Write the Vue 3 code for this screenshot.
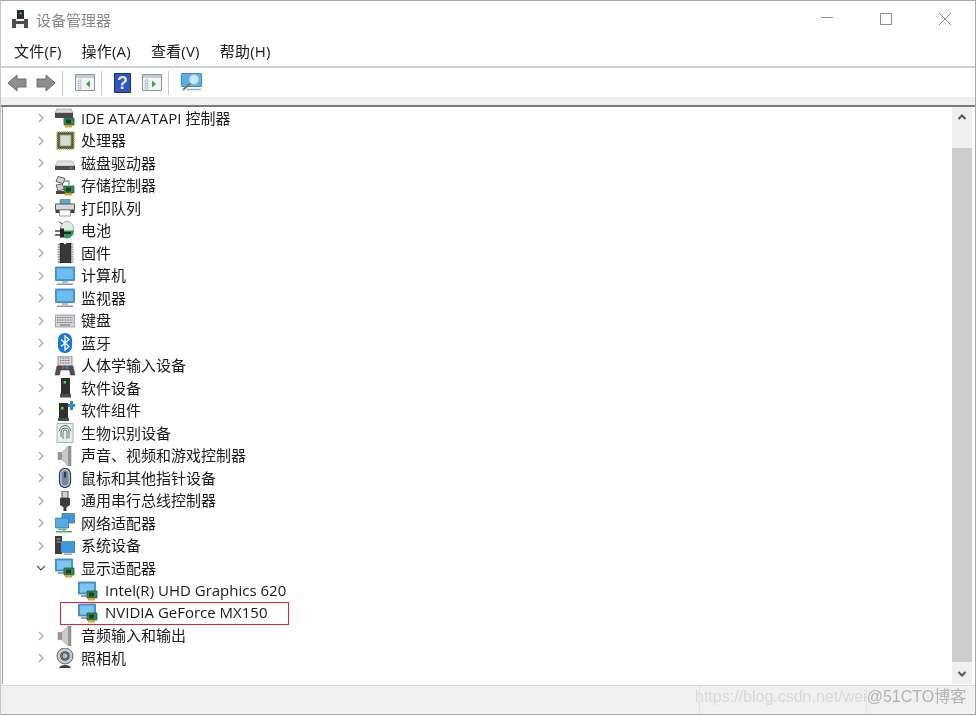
<template>
  <div class="win">
    <svg class="defs" aria-hidden="true">
      <symbol id="i-card" viewBox="0 0 20 20">
        <path d="M9 10h10v7H9z" fill="#2f8f52" stroke="#1d5f36" stroke-width=".8" />
        <path d="M11 11.500h5v4h-5z" fill="#263a2e" />
        <path d="M10 17h7v2.500h-7z" fill="#e0a030" />
      </symbol>
      <symbol id="i-ide" viewBox="0 0 20 20">
        <path d="M2 1h14l2 4H0z" fill="#d8d8d8" stroke="#8a8a8a" stroke-width=".6" />
        <path d="M0 5h18v5H0z" fill="#4a4a4a" />
        <use href="#i-card" />
      </symbol>
      <symbol id="i-cpu" viewBox="0 0 20 20">
        <path d="M2 1h17v17H2z" fill="#3d6b3a" stroke="#c4a040" stroke-width="1.600" stroke-dasharray="1.200 .8" />
        <path d="M5 4h11v11H5z" fill="#d9d9d6" stroke="#8f948c" stroke-width=".8" />
      </symbol>
      <symbol id="i-disk" viewBox="0 0 20 20">
        <path d="M3 8h14l3 5H0z" fill="#e2e2e2" stroke="#9a9a9a" stroke-width=".6" />
        <path d="M0 13h20v4H0z" fill="#4c4c4c" />
        <path d="M14.500 14.500h3v1h-3z" fill="#58d060" />
      </symbol>
      <symbol id="i-storage" viewBox="0 0 20 20">
        <path d="M3 .5l7 2-2 5-7-2z" fill="#d6d6d6" stroke="#555" stroke-width=".9" />
        <path d="M1 9l6-1 3 5-7 2z" fill="#cfcfcf" stroke="#555" stroke-width=".9" />
        <path d="M1 15h9v3H1z" fill="#444" />
        <path d="M9 5h5v4" fill="none" stroke="#666" />
        <use href="#i-card" />
      </symbol>
      <symbol id="i-printer" viewBox="0 0 20 20">
        <path d="M5 1.500h10v5H5z" fill="#5aa6e6" stroke="#666" stroke-width=".6" />
        <path d="M.5 6h19v6H.5z" fill="#d8d8d8" stroke="#555" />
        <path d="M.5 12h19v3H.5z" fill="#3c3c3c" />
        <path d="M4.500 12h11v6h-11z" fill="#fff" stroke="#777" stroke-width=".7" />
      </symbol>
      <symbol id="i-battery" viewBox="0 0 20 20">
        <path d="M3 0l5 2.500-1 1z" fill="#333" />
        <circle cx="12" cy="7" r="6.500" fill="#dceee2" stroke="#7b8f84" stroke-width=".7" />
        <path d="M5.500 9h13a6.500 7 0 0 1-13 0z" fill="#2f9e58" stroke="#1d6a3c" stroke-width=".7" transform="translate(0 1)" />
        <path d="M0 10h6M0 14h6" stroke="#444" stroke-width="1.500" />
        <path d="M5 7.500h4v9H5zM9 11h7v2H9z" fill="#222" />
      </symbol>
      <symbol id="i-firmware" viewBox="0 0 20 20">
        <path d="M5 0h3.500a1.500 1.500 0 0 0 3 0H16v20H5z" fill="#383838" stroke="#111" stroke-width=".5" />
        <path d="M2.500 1.500H5M2.500 4H5M2.500 6.500H5M2.500 9H5M2.500 11.500H5M2.500 14H5M2.500 16.500H5M2.500 19H5M16 1.500h2.500M16 4h2.500M16 6.500h2.500M16 9h2.500M16 11.500h2.500M16 14h2.500M16 16.500h2.500M16 19h2.500" stroke="#9a9a9a" stroke-width="1.300" />
      </symbol>
      <symbol id="i-monitor" viewBox="0 0 20 20">
        <path d="M.5 1h19v13.500H.5z" fill="#3f98dc" stroke="#3f7fae" stroke-width=".8" />
        <path d="M2 2.500h16v10.500H2z" fill="#6cbcf0" />
        <path d="M7 15h6v2H7z" fill="#b5bdc4" />
        <path d="M2 17.500h16v1.500H2z" fill="#8d969e" />
      </symbol>
      <symbol id="i-keyboard" viewBox="0 0 20 20">
        <path d="M.5 4h19v12H.5z" fill="#d3d5d7" stroke="#8e9297" stroke-width=".8" />
        <path d="M2 6.500h16M2 9h16M2 11.500h16" stroke="#777b80" stroke-width="1.200" stroke-dasharray="1 .6" />
        <path d="M5 14h10" stroke="#777b80" stroke-width="1.200" />
      </symbol>
      <symbol id="i-bt" viewBox="0 0 20 20">
        <rect x="3" y="0" width="14" height="20" rx="6.500" fill="#1479e0" />
        <path d="M6 6.500l8 7-4 3.500V3l4 3.500-8 7" fill="none" stroke="#fff" stroke-width="1.300" />
      </symbol>
      <symbol id="i-hid" viewBox="0 0 20 20">
        <path d="M3 0h14v10H3z" fill="#d5d7d9" stroke="#808488" stroke-width=".8" />
        <path d="M5 2h10M5 4.500h10M5 7h10" stroke="#777" stroke-width="1.200" stroke-dasharray="1 .6" />
        <path d="M0 19l2-9h16l2 9h-4.500l-1-5h-9l-1 5z" fill="#4d5156" stroke="#333" stroke-width=".5" />
        <circle cx="8" cy="11.500" r="1.400" fill="#d03a30" />
        <circle cx="12" cy="11.500" r="1.400" fill="#3a7ed0" />
      </symbol>
      <symbol id="i-device" viewBox="0 0 20 20">
        <path d="M6 0h9v16H6z" fill="#2f2f2f" />
        <path d="M8.500 3H11v2.500H8.500z" fill="#48e060" />
        <path d="M5 16h11v3.500H5z" fill="#4a4a4a" />
      </symbol>
      <symbol id="i-comp" viewBox="0 0 20 20">
        <path d="M4 2h9v15H4z" fill="#2f2f2f" />
        <path d="M6 6h2.500v2.500H6z" fill="#48e060" />
        <path d="M3 17h11v3H3z" fill="#4a4a4a" />
        <path d="M15 0h3v3h2v3h-2v3h-3V6h-2V3h2z" fill="#2f86d8" />
      </symbol>
      <symbol id="i-finger" viewBox="0 0 20 20">
        <path d="M2 .5h16v19H2z" fill="#e8eeee" stroke="#a4b4b4" stroke-width="1" />
        <path d="M6 14V9a4 4 0 0 1 8 0v6M8 16V9a2 2 0 0 1 4 0v7M4.500 8a5.500 5.500 0 0 1 11 0" fill="none" stroke="#6c7474" />
      </symbol>
      <symbol id="i-sound" viewBox="0 0 20 20">
        <path d="M3 6.500h4l6-6.500h3v20h-3l-6-6.500H3z" fill="#969696" stroke="#808080" stroke-width=".5" />
        <path d="M7 6.500l6-6.500v20l-6-6.500z" fill="#cacaca" />
      </symbol>
      <symbol id="i-mouse" viewBox="0 0 20 20">
        <rect x="4.500" y=".5" width="11" height="19" rx="5.500" fill="#c8ced6" stroke="#2c3138" stroke-width="1.200" />
        <rect x="6.500" y="2.500" width="7" height="15" rx="3.500" fill="#6f86a6" />
        <path d="M10 4v5.500" stroke="#273445" stroke-width="1.800" />
      </symbol>
      <symbol id="i-usb" viewBox="0 0 20 20">
        <path d="M7 0h6v7H7z" fill="#d4d4d4" stroke="#444" stroke-width=".9" />
        <path d="M5 7h10v7l-3 2H8l-3-2z" fill="#3c3c3c" />
        <path d="M8.500 16h3v4h-3z" fill="#3c3c3c" />
      </symbol>
      <symbol id="i-network" viewBox="0 0 20 20">
        <path d="M7 .5h12.500v9.500H7z" fill="#3f98dc" stroke="#3a6f99" stroke-width=".7" />
        <path d="M.5 5h13v10H.5z" fill="#56ace8" stroke="#3a6f99" stroke-width=".7" />
        <path d="M3 15.500h9v1.500H3z" fill="#9aa2a8" />
        <path d="M1 18.800h16M9 16v3" stroke="#4fb948" stroke-width="1.500" />
      </symbol>
      <symbol id="i-system" viewBox="0 0 20 20">
        <path d="M0 0h7v18H0z" fill="#3b3b3b" />
        <path d="M1.500 2.500h4v1h-4zM1.500 5.500h4v1h-4z" fill="#b0b0b0" />
        <path d="M6 5.500h14v11H6z" fill="#3f98dc" stroke="#3a6f99" stroke-width=".6" />
        <path d="M9 17.500h8v1.500H9z" fill="#9aa2a8" />
      </symbol>
      <symbol id="i-display" viewBox="0 0 20 20">
        <path d="M.5 1h17v12H.5z" fill="#3f98dc" stroke="#3f7fae" stroke-width=".8" />
        <path d="M2 2.500h14v9H2z" fill="#7cc4f2" />
        <path d="M3 14h7v2H3z" fill="#9aa2a8" />
        <use href="#i-card" />
      </symbol>
      <symbol id="i-camera" viewBox="0 0 20 20">
        <circle cx="10" cy="8" r="8" fill="#c9c9c9" stroke="#6a6a6a" />
        <circle cx="10" cy="8" r="4.800" fill="#5a6068" />
        <circle cx="10" cy="8" r="2.400" fill="#a6c4dc" />
        <path d="M4 20c1-4 11-4 12 0z" fill="#3e3e3e" />
      </symbol>
      <symbol id="i-win" viewBox="0 0 20 17">
        <path d="M.5.5h19v16H.5z" fill="#f3f4f5" stroke="#8f9499" />
        <path d="M1 1h18v3H1z" fill="#c6cbd0" />
        <path d="M3 6h3v2H3zM3 9.500h3v2H3zM3 13h3v2H3z" fill="#fff" stroke="#7f9cbc" stroke-width=".6" />
      </symbol>
    </svg>

    <header class="title-bar">
      <svg class="app-icon" viewBox="0 0 18 20" width="18" height="20">
        <path d="M6 1h7v9H6z" fill="#2d2d2d" />
        <path d="M8.500 3.500h2v2h-2z" fill="#44d060" />
        <path d="M1 10h4v2h8v-2h4v9H1z" fill="#4d4d4d" />
        <path d="M5 15h8v4H5z" fill="#f2f2f2" />
      </svg>
      <span class="app-title">设备管理器</span>
      <div class="win-buttons">
        <svg width="14" height="14" viewBox="0 0 14 14"><path d="M1 5.500h12" stroke="#8c8c8c" /></svg>
        <svg width="14" height="14" viewBox="0 0 14 14"><path d="M1.500 1.500h11v11h-11z" fill="none" stroke="#8c8c8c" /></svg>
        <svg width="14" height="14" viewBox="0 0 14 14"><path d="M1 1l12 12M13 1L1 13" stroke="#8c8c8c" /></svg>
      </div>
    </header>

    <nav class="menu-bar">
      <span v-for="m in menus" :key="m" class="menu-item">{{ m }}</span>
    </nav>

    <div class="tool-bar">
      <svg width="20" height="18" viewBox="0 0 20 18"><path d="M10 1L1 9l9 8v-4h9V5h-9z" fill="#8f8f8f" stroke="#6f6f6f" /></svg>
      <svg class="tb-second" width="20" height="18" viewBox="0 0 20 18"><path d="M10 1l9 8-9 8v-4H1V5h9z" fill="#8f8f8f" stroke="#6f6f6f" /></svg>
      <i class="tb-sep"></i>
      <svg width="20" height="17" viewBox="0 0 20 17">
        <use href="#i-win" width="20" height="17" />
        <path d="M15 6.500v7l-4-3.500z" fill="#2fa84a" />
      </svg>
      <i class="tb-sep"></i>
      <svg width="17" height="20" viewBox="0 0 17 20">
        <path d="M.5.5h16v19H.5z" fill="#2f55c4" stroke="#1b2f80" />
        <text x="8.500" y="16" text-anchor="middle" class="help-q">?</text>
      </svg>
      <svg class="tb-next" width="20" height="17" viewBox="0 0 20 17">
        <use href="#i-win" width="20" height="17" />
        <path d="M10 6.500v7l4-3.500z" fill="#2fa84a" />
      </svg>
      <i class="tb-sep"></i>
      <svg width="21" height="19" viewBox="0 0 21 19">
        <path d="M.5.500h20v13H.5z" fill="#58b0ea" stroke="#3f8fc6" />
        <circle cx="13" cy="6.500" r="5" fill="#cfe9fa" stroke="#8db6d2" />
        <path d="M9 10.500L2 17" stroke="#777" stroke-width="2" />
        <path d="M6 16.500h14" stroke="#a5abb0" stroke-width="1.500" />
      </svg>
    </div>
    <div class="strip"></div>

    <main class="tree-frame">
      <div class="tree">
        <div
          v-for="row in rows"
          :key="row.label"
          class="row"
          :class="{ child: row.child, marked: row.marked }"
        >
          <span class="chevron">
            <svg v-if="row.open" width="10" height="10" viewBox="0 0 10 10"><path d="M1 3l4 4 4-4" fill="none" stroke="#555" stroke-width="1.200" /></svg>
            <svg v-else-if="!row.child" width="10" height="10" viewBox="0 0 10 10"><path d="M3 1l4 4-4 4" fill="none" stroke="#a6a6a6" stroke-width="1.200" /></svg>
          </span>
          <svg class="row-icon" width="20" height="20"><use :href="'#i-' + row.icon" width="20" height="20" /></svg>
          <span class="row-label">{{ row.label }}</span>
        </div>
      </div>
      <div class="scrollbar">
        <button class="sb-btn" type="button">
          <svg width="10" height="8" viewBox="0 0 10 8"><path d="M1.500 6L5 2.500 8.500 6" fill="none" stroke="#555" stroke-width="2" /></svg>
        </button>
        <div class="sb-track"><div class="sb-thumb"></div></div>
        <button class="sb-btn" type="button">
          <svg width="10" height="8" viewBox="0 0 10 8"><path d="M1.500 2L5 5.500 8.500 2" fill="none" stroke="#555" stroke-width="2" /></svg>
        </button>
      </div>
    </main>

    <footer class="status-bar">
      <div class="st-cell wide"></div>
      <div class="st-cell mid"></div>
      <div class="st-cell"></div>
      <span class="watermark">https://blog.csdn.net/wei<b>@51CTO博客</b></span>
    </footer>
  </div>
</template>

<script setup>
const menus = ['文件(F)', '操作(A)', '查看(V)', '帮助(H)']

const rows = [
  { label: 'IDE ATA/ATAPI 控制器', icon: 'ide' },
  { label: '处理器', icon: 'cpu' },
  { label: '磁盘驱动器', icon: 'disk' },
  { label: '存储控制器', icon: 'storage' },
  { label: '打印队列', icon: 'printer' },
  { label: '电池', icon: 'battery' },
  { label: '固件', icon: 'firmware' },
  { label: '计算机', icon: 'monitor' },
  { label: '监视器', icon: 'monitor' },
  { label: '键盘', icon: 'keyboard' },
  { label: '蓝牙', icon: 'bt' },
  { label: '人体学输入设备', icon: 'hid' },
  { label: '软件设备', icon: 'device' },
  { label: '软件组件', icon: 'comp' },
  { label: '生物识别设备', icon: 'finger' },
  { label: '声音、视频和游戏控制器', icon: 'sound' },
  { label: '鼠标和其他指针设备', icon: 'mouse' },
  { label: '通用串行总线控制器', icon: 'usb' },
  { label: '网络适配器', icon: 'network' },
  { label: '系统设备', icon: 'system' },
  { label: '显示适配器', icon: 'display', open: true },
  { label: 'Intel(R) UHD Graphics 620', icon: 'display', child: true },
  { label: 'NVIDIA GeForce MX150', icon: 'display', child: true, marked: true },
  { label: '音频输入和输出', icon: 'sound' },
  { label: '照相机', icon: 'camera' },
]
</script>

<style>
html,
body {
  margin: 0;
  background: #fff;
}
</style>

<style scoped>
.win {
  width: 976px;
  height: 715px;
  box-sizing: border-box;
  border-top: 1px solid #a8a8a8;
  border-right: 1px solid #a8a8a8;
  border-left: 1px solid #c4c4c4;
  display: flex;
  flex-direction: column;
  overflow: hidden;
  position: relative;
  filter: blur(0.3px);
  font-family: "Open Sans", "Noto Sans CJK SC", sans-serif;
  color: #1a1a1a;
  background: #fff;
}

.win::after {
  content: "";
  position: absolute;
  right: -1px;
  top: 27px;
  width: 1px;
  height: 42px;
  background: #8a2a30;
}

.defs {
  display: block;
  width: 0;
  height: 0;
}

.title-bar {
  height: 36px;
  flex: none;
  display: flex;
  align-items: center;
  padding: 0 23px 0 10px;
}

.app-icon {
  margin-right: 7px;
}

.app-title {
  font-size: 15px;
  color: #8a8a8a;
}

.win-buttons {
  margin-left: auto;
  display: flex;
  gap: 45px;
}

.menu-bar {
  height: 27px;
  flex: none;
  display: flex;
  align-items: center;
  gap: 20px;
  padding: 0 0 2px 13px;
  font-size: 15px;
  border-bottom: 2px solid #c9d2da;
}

.menu-item {
  letter-spacing: .2px;
}

.tool-bar {
  height: 29px;
  flex: none;
  display: flex;
  align-items: center;
  padding-left: 6px;
}

.tb-second {
  margin-left: 9px;
}

.tb-sep {
  width: 1px;
  height: 24px;
  background: #c8c8c8;
  margin: 0 12px 0 6px;
}

.tb-next {
  margin-left: 11px;
}

.help-q {
  fill: #e8ecf8;
  font: 700 18px "Liberation Sans", sans-serif;
}

.strip {
  height: 8px;
  flex: none;
  background: #f0f0f0;
  border-bottom: 2px solid #7b7b7b;
}

.tree-frame {
  height: 577px;
  flex: none;
  display: flex;
  margin: 0 3px 0 1px;
  border-left: 1px solid #a0a0a0;
}

.tree {
  flex: 1;
  min-width: 0;
}

.row {
  height: 22.5px;
  display: flex;
  align-items: center;
  position: relative;
  font-size: 15px;
  white-space: nowrap;
}

.chevron {
  width: 10px;
  height: 10px;
  display: flex;
  margin: 0 9px 0 33px;
  flex: none;
}

.row-icon {
  flex: none;
  margin-right: 6px;
}

.row-label {
  margin-bottom: 2px;
}

.row.child .chevron {
  margin-right: 32px;
}

.row.child .row-icon {
  margin-right: 7px;
}

.row.marked::after {
  content: "";
  position: absolute;
  left: 57px;
  top: 0;
  width: 227px;
  height: 21px;
  border: 1px solid #e8202a;
}

.scrollbar {
  width: 20px;
  flex: none;
  display: flex;
  flex-direction: column;
  background: #efefef;
}

.sb-btn {
  height: 20px;
  flex: none;
  padding: 0;
  border: 0;
  background: none;
  display: flex;
  align-items: center;
  justify-content: center;
}

.sb-track {
  flex: 1;
  padding: 21px 0 2px;
  box-sizing: border-box;
  display: flex;
}

.sb-thumb {
  flex: 1;
  background: #cdcdcd;
}

.status-bar {
  flex: 1;
  min-height: 0;
  display: flex;
  position: relative;
  background: #f0f0f0;
  border-top: 1px solid #dcdcdc;
  border-bottom: 1px solid #a8a8a8;
  margin-top: 1px;
}

.st-cell {
  flex: 1;
  border-left: 1px solid #e2e2e2;
}

.st-cell.wide {
  flex: none;
  width: 698px;
  border-left: 0;
}

.st-cell.mid {
  flex: none;
  width: 166px;
}

.watermark {
  position: absolute;
  left: 694px;
  top: 0;
  font: 16px "Liberation Sans", "Noto Sans CJK SC", sans-serif;
  line-height: 22px;
  color: #d9d9d9;
  white-space: nowrap;
}

.watermark b {
  font-weight: 400;
  color: #b4b4b4;
}
</style>
